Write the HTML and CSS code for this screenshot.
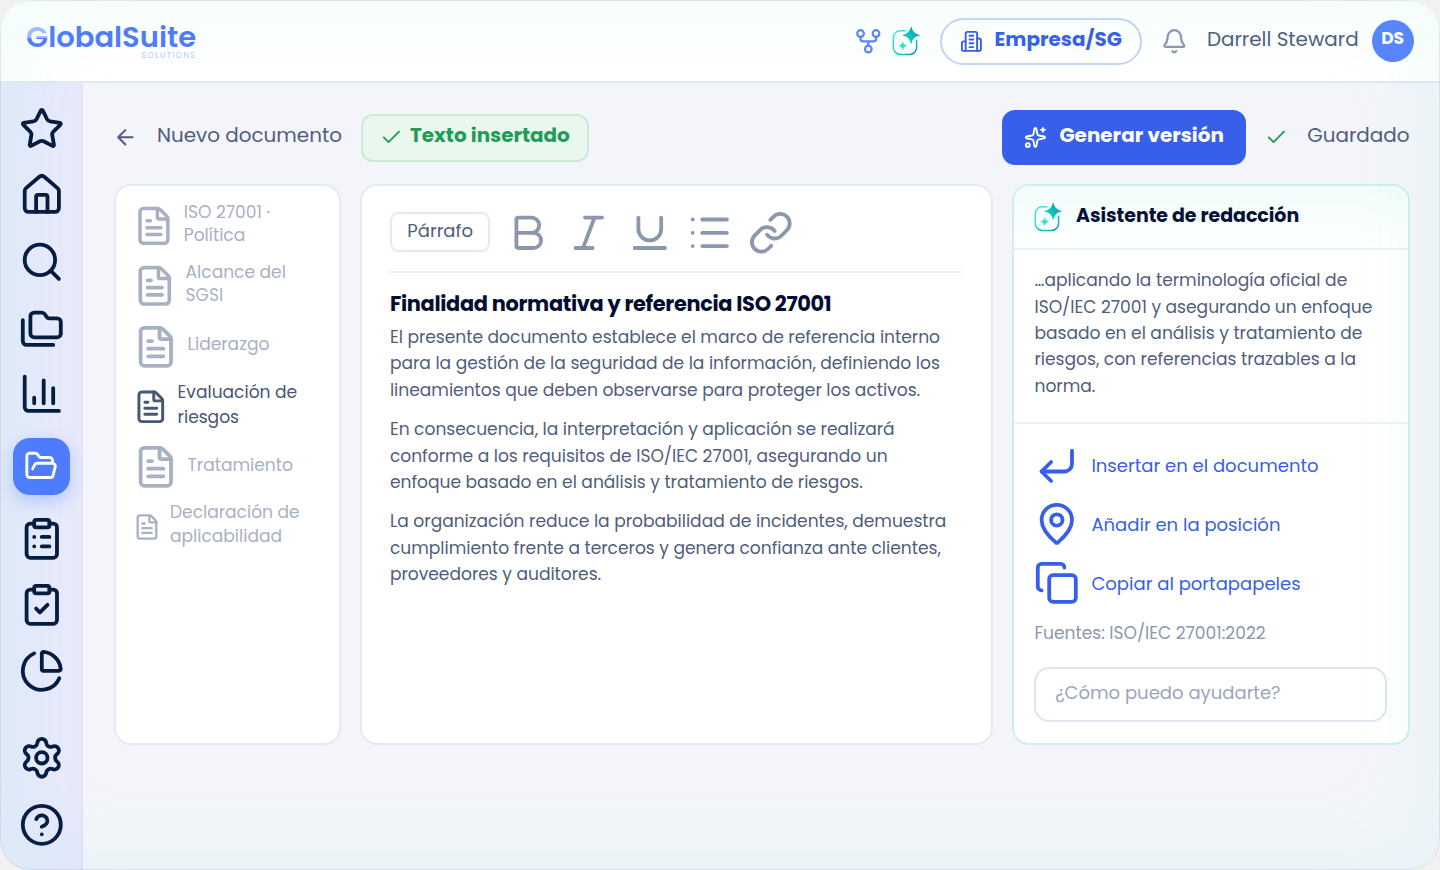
FILE: index.html
```
<!DOCTYPE html>
<html lang="es">
<head>
<meta charset="UTF-8">
<meta name="viewport" content="width=device-width,initial-scale=1">
<title>GlobalSuite · Nuevo documento</title>
<link rel="stylesheet" href="styles.css">
</head>
<body>

<!-- símbolos reutilizados -->
<svg class="defs" width="0" height="0" aria-hidden="true">
  <linearGradient id="gradIA" x1="0" y1="0" x2="1" y2="1">
    <stop offset="0" stop-color="#4fe9d6"/><stop offset=".55" stop-color="#12d6c2"/><stop offset="1" stop-color="#0b8fc4"/>
  </linearGradient>
  <linearGradient id="gradStar" x1="1" y1="0" x2="0" y2="1">
    <stop offset="0.2" stop-color="#0a9cc0"/><stop offset="0.8" stop-color="#12dcba"/>
  </linearGradient>
  <symbol id="doc" viewBox="0 0 24 24">
    <path d="M6 22a2 2 0 0 1-2-2V4a2 2 0 0 1 2-2h8a2.4 2.4 0 0 1 1.704.706l3.588 3.588A2.4 2.4 0 0 1 20 8v12a2 2 0 0 1-2 2z"/>
    <path d="M14 2v5a1 1 0 0 0 1 1h5M10 9H8M16 13H8M16 17H8"/>
  </symbol>
  <symbol id="check" viewBox="0 0 24 24"><path d="M20 6 9 17l-5-5"/></symbol>
  <symbol id="ia" viewBox="0 0 28 30">
    <path d="M13 4.7H8.3a7 7 0 0 0-7 7v9.700a7 7 0 0 0 7 7h9.300a7 7 0 0 0 7-7v-7.200" stroke="url(#gradIA)" stroke-width="1.5"/>
    <path d="M19.200 0c1.700 6 3.200 7.500 9.200 9.200-6 1.700-7.500 3.200-9.200 9.200-1.700-6-3.200-7.500-9.200-9.200 6-1.700 7.500-3.200 9.200-9.200z" fill="url(#gradStar)" stroke="none"/>
    <path d="M10.700 15c.7 3 1.700 4 4.700 4.700-3 .7-4 1.700-4.700 4.700-.7-3-1.700-4-4.700-4.700 3-.7 4-1.700 4.700-4.700z" fill="#35dfca" stroke="none"/>
  </symbol>
</svg>

<div class="app">
  <header class="header">
    <div class="logo">
      <span class="logo-name"><span class="logo-g">G</span>lobalSuite</span>
      <span class="logo-sub">SOLUTIONS</span>
    </div>
    <div class="header-right">
      <svg class="ico fork" viewBox="0 0 24 24"><circle cx="12" cy="19" r="3"/><circle cx="5" cy="5" r="3"/><circle cx="19" cy="5" r="3"/><path d="M19 8v2c0 1.200-.8 2-2 2H7c-1.200 0-2-.8-2-2V8M12 12v4"/></svg>
      <svg class="ico ia"><use href="#ia"/></svg>
      <button class="empresa">
        <svg class="ico sm" viewBox="0 0 24 24"><path d="M6 22V4a2 2 0 0 1 2-2h8a2 2 0 0 1 2 2v18Z"/><path d="M6 12H4a2 2 0 0 0-2 2v6a2 2 0 0 0 2 2h2M18 9h2a2 2 0 0 1 2 2v9a2 2 0 0 1-2 2h-2M10 6h4M10 10h4M10 14h4M10 18h4"/></svg>
        <span class="up">Empresa/SG</span>
      </button>
      <svg class="ico bell" viewBox="0 0 24 24"><path d="M10.268 21a2 2 0 0 0 3.464 0"/><path d="M3.262 15.326A1 1 0 0 0 4 17h16a1 1 0 0 0 .74-1.673C19.41 13.956 18 12.499 18 8A6 6 0 0 0 6 8c0 4.499-1.411 5.956-2.738 7.326"/></svg>
      <span class="user up">Darrell Steward</span>
      <span class="avatar"><span class="up">DS</span></span>
    </div>
  </header>

  <div class="body">
    <nav class="sidebar">
      <svg class="ico" viewBox="0 0 24 24"><path d="M11.525 2.295a.53.53 0 0 1 .95 0l2.31 4.679a2.123 2.123 0 0 0 1.595 1.16l5.166.756a.53.53 0 0 1 .294.904l-3.736 3.638a2.123 2.123 0 0 0-.611 1.878l.882 5.14a.53.53 0 0 1-.771.56l-4.618-2.428a2.122 2.122 0 0 0-1.973 0L6.396 21.01a.53.53 0 0 1-.77-.56l.881-5.139a2.122 2.122 0 0 0-.611-1.879L2.16 9.795a.53.53 0 0 1 .294-.906l5.165-.755a2.122 2.122 0 0 0 1.597-1.16z"/></svg>
      <svg class="ico" viewBox="0 0 24 24"><path d="M15 21v-8a1 1 0 0 0-1-1h-4a1 1 0 0 0-1 1v8"/><path d="M3 10a2 2 0 0 1 .709-1.528l7-6a2 2 0 0 1 2.582 0l7 6A2 2 0 0 1 21 10v9a2 2 0 0 1-2 2H5a2 2 0 0 1-2-2z"/></svg>
      <svg class="ico" viewBox="0 0 24 24"><circle cx="11" cy="11" r="8"/><path d="m21 21-4.34-4.34"/></svg>
      <svg class="ico" viewBox="0 0 24 24"><path d="M20 17a2 2 0 0 0 2-2V9a2 2 0 0 0-2-2h-3.9a2 2 0 0 1-1.69-.9l-.81-1.2a2 2 0 0 0-1.67-.9H8a2 2 0 0 0-2 2v9a2 2 0 0 0 2 2Z"/><path d="M2 8v11a2 2 0 0 0 2 2h14"/></svg>
      <svg class="ico" viewBox="0 0 24 24"><path d="M3 3v16a2 2 0 0 0 2 2h16M18 17V9M13 17V5M8 17v-3"/></svg>
      <div class="active">
        <svg class="ico" viewBox="0 0 24 24"><path d="m6 14 1.5-2.9A2 2 0 0 1 9.24 10H20a2 2 0 0 1 1.94 2.5l-1.54 6a2 2 0 0 1-1.95 1.5H4a2 2 0 0 1-2-2V5a2 2 0 0 1 2-2h3.9a2 2 0 0 1 1.69.9l.81 1.2a2 2 0 0 0 1.67.9H18a2 2 0 0 1 2 2v2"/></svg>
      </div>
      <svg class="ico" viewBox="0 0 24 24"><rect x="8" y="2" width="8" height="4" rx="1"/><path d="M16 4h2a2 2 0 0 1 2 2v14a2 2 0 0 1-2 2H6a2 2 0 0 1-2-2V6a2 2 0 0 1 2-2h2M12 11h4M12 16h4M8 11h.01M8 16h.01"/></svg>
      <svg class="ico" viewBox="0 0 24 24"><rect x="8" y="2" width="8" height="4" rx="1"/><path d="M16 4h2a2 2 0 0 1 2 2v14a2 2 0 0 1-2 2H6a2 2 0 0 1-2-2V6a2 2 0 0 1 2-2h2M9 14l2 2 4-4"/></svg>
      <svg class="ico" viewBox="0 0 24 24"><path d="M21 12c.552 0 1.005-.449.95-.998a10 10 0 0 0-8.953-8.951c-.55-.055-.998.398-.998.95v8a1 1 0 0 0 1 1z"/><path d="M21.21 15.89A10 10 0 1 1 8 2.83"/></svg>
      <svg class="ico last" viewBox="0 0 24 24"><path d="M9.671 4.136a2.34 2.34 0 0 1 4.659 0 2.34 2.34 0 0 0 3.319 1.915 2.34 2.34 0 0 1 2.33 4.033 2.34 2.34 0 0 0 0 3.831 2.34 2.34 0 0 1-2.33 4.033 2.34 2.34 0 0 0-3.319 1.915 2.34 2.34 0 0 1-4.659 0 2.34 2.34 0 0 0-3.32-1.915 2.34 2.34 0 0 1-2.33-4.033 2.34 2.34 0 0 0 0-3.831A2.34 2.34 0 0 1 6.35 6.051a2.34 2.34 0 0 0 3.319-1.915"/><circle cx="12" cy="12" r="3"/></svg>
      <svg class="ico" viewBox="0 0 24 24"><circle cx="12" cy="12" r="10"/><path d="M9.09 9a3 3 0 0 1 5.83 1c0 2-3 3-3 3M12 17h.01"/></svg>
    </nav>

    <main class="main">
      <div class="topbar">
        <svg class="ico back" viewBox="0 0 24 24"><path d="m12 19-7-7 7-7M19 12H5"/></svg>
        <span class="up">Nuevo documento</span>
        <span class="pill"><svg class="ico sm"><use href="#check"/></svg><span class="up">Texto insertado</span></span>
        <button class="generar">
          <svg class="ico sm" viewBox="0 0 24 24"><path d="M11.017 2.814a1 1 0 0 1 1.966 0l1.051 5.558a2 2 0 0 0 1.594 1.594l5.558 1.051a1 1 0 0 1 0 1.966l-5.558 1.051a2 2 0 0 0-1.594 1.594l-1.051 5.558a1 1 0 0 1-1.966 0l-1.051-5.558a2 2 0 0 0-1.594-1.594l-5.558-1.051a1 1 0 0 1 0-1.966l5.558-1.051a2 2 0 0 0 1.594-1.594z"/><path d="M20 2v4M22 4h-4"/><circle cx="4" cy="20" r="2"/></svg>
          <span class="up">Generar versión</span>
        </button>
        <svg class="ico sm ok"><use href="#check"/></svg>
        <span class="up">Guardado</span>
      </div>

      <div class="panels">
        <aside class="panel indice">
          <div class="item"><svg class="ico d1"><use href="#doc"/></svg><span>ISO 27001 ·<br>Política</span></div>
          <div class="item"><svg class="ico d2"><use href="#doc"/></svg><span>Alcance del<br>SGSI</span></div>
          <div class="item"><svg class="ico"><use href="#doc"/></svg><span>Liderazgo</span></div>
          <div class="item sel"><svg class="ico d3"><use href="#doc"/></svg><span>Evaluación de<br>riesgos</span></div>
          <div class="item"><svg class="ico"><use href="#doc"/></svg><span>Tratamiento</span></div>
          <div class="item alto"><svg class="ico d4"><use href="#doc"/></svg><span>Declaración de<br>aplicabilidad</span></div>
        </aside>

        <section class="panel editor">
          <div class="tools">
            <button class="parrafo">Párrafo</button>
            <svg class="ico" viewBox="0 0 24 24"><path d="M6 12h9a4 4 0 0 1 0 8H7a1 1 0 0 1-1-1V5a1 1 0 0 1 1-1h7a4 4 0 0 1 0 8"/></svg>
            <svg class="ico" viewBox="0 0 24 24"><path d="M19 4h-9M14 20H5M15 4 9 20"/></svg>
            <svg class="ico" viewBox="0 0 24 24"><path d="M6 4v6a6 6 0 0 0 12 0V4M4 20h16"/></svg>
            <svg class="ico" viewBox="0 0 24 24"><path d="M3 5h.01M3 12h.01M3 19h.01M8 5h13M8 12h13M8 19h13"/></svg>
            <svg class="ico" viewBox="0 0 24 24"><path d="M10 13a5 5 0 0 0 7.54.54l3-3a5 5 0 0 0-7.07-7.07l-1.72 1.71"/><path d="M14 11a5 5 0 0 0-7.54-.54l-3 3a5 5 0 0 0 7.07 7.07l1.71-1.71"/></svg>
          </div>
          <h1>Finalidad normativa y referencia ISO 27001</h1>
          <p>El presente documento establece el marco de referencia interno<br>para la gestión de la seguridad de la información, definiendo los<br>lineamientos que deben observarse para proteger los activos.</p>
          <p>En consecuencia, la interpretación y aplicación se realizará<br>conforme a los requisitos de ISO/IEC 27001, asegurando un<br>enfoque basado en el análisis y tratamiento de riesgos.</p>
          <p>La organización reduce la probabilidad de incidentes, demuestra<br>cumplimiento frente a terceros y genera confianza ante clientes,<br>proveedores y auditores.</p>
        </section>

        <section class="panel asistente">
          <h2><svg class="ico ia"><use href="#ia"/></svg><span class="up">Asistente de redacción</span></h2>
          <p>…aplicando la terminología oficial de<br>ISO/IEC 27001 y asegurando un enfoque<br>basado en el análisis y tratamiento de<br>riesgos, con referencias trazables a la<br>norma.</p>
          <div class="acciones">
            <a><svg class="ico" viewBox="0 0 24 24"><path d="M20 4v7a4 4 0 0 1-4 4H4"/><path d="m9 10-5 5 5 5"/></svg>Insertar en el documento</a>
            <a><svg class="ico" viewBox="0 0 24 24"><path d="M20 10c0 4.993-5.539 10.193-7.399 11.799a1 1 0 0 1-1.202 0C9.539 20.193 4 14.993 4 10a8 8 0 0 1 16 0"/><circle cx="12" cy="10" r="3"/></svg>Añadir en la posición</a>
            <a><svg class="ico" viewBox="0 0 24 24"><rect x="8" y="8" width="14" height="14" rx="2"/><path d="M4 16c-1.1 0-2-.9-2-2V4c0-1.1.9-2 2-2h10c1.1 0 2 .9 2 2"/></svg>Copiar al portapapeles</a>
          </div>
          <div class="fuentes">Fuentes: ISO/IEC 27001:2022</div>
          <input class="ask" placeholder="¿Cómo puedo ayudarte?">
        </section>
      </div>
    </main>
  </div>
</div>

</body>
</html>
```
FILE: styles.css
```
:root{
  --azul:    #385fe9;
  --marca:   #4f7bff;
  --navy:    #061a3f;
  --texto:   #4f5e7c;
  --gris:    #8b97ad;
  --linea:   #e4e9f3;
}
*{box-sizing:border-box;margin:0;padding:0}
body{
  font-family:Poppins,Inter,"Open Sans",sans-serif;
  font-size:19.95px;
  letter-spacing:-.02px;
  color:var(--texto);
  background:#f1f1f3;
}
button,input{font-family:inherit;background:none}
.defs{position:absolute}

/* ---------- Iconos ------------- */
.ico{
  width:45.6px;height:45.6px;
  flex:none;
  display:block;
  fill:none;
  stroke:currentColor;
  stroke-width:2;
  stroke-linecap:round;
  stroke-linejoin:round;
}
.ico.sm{width:22.8px;height:22.8px}
.ico.ia{width:28px;height:30px;overflow:visible}
/* la caja de Poppins queda algo baja */
.up{position:relative;top:-2px}

/* ---------- Marco -------------- */
.app{
  position:relative;
  width:1440px;height:870px;
  display:flex;
  flex-direction:column;
  background:#f4f5fa;
  border-radius:30px;
  overflow:hidden;
}
.app::after{
  content:"";
  position:absolute;inset:0;
  border-radius:30px;
  border:1px solid rgba(120,135,160,.2);
  box-shadow:inset 0 0 95px rgba(60,225,195,.085);
  pointer-events:none;
}

/* ---------- Header ------------- */
.header{
  height:83px;
  flex:none;
  display:flex;
  justify-content:space-between;
  align-items:center;
  padding:1px 26.4px 0 26px;
  background:#fff;
  border-bottom:2px solid #e2e8f2;
}
.logo{
  display:flex;
  flex-direction:column;
  align-items:flex-end;
  color:var(--marca);
}
.logo-name{font-size:29px;font-weight:600;line-height:30px}
.logo-g{
  background:linear-gradient(#a3bbff 53%,var(--marca) 53%);
  -webkit-background-clip:text;
  background-clip:text;
  color:transparent;
}
.logo-sub{
  margin:-1px 0 0;
  font-size:8px;
  line-height:9px;
  letter-spacing:1.3px;
  color:#b5c6fc;
}
.header-right{display:flex;align-items:center}
.ico.fork{width:26.6px;height:26.6px;color:#5a83fb;margin-right:10.5px}
.empresa{
  display:flex;
  align-items:center;
  gap:11.4px;
  height:47px;
  margin:0 19px 0 20px;
  padding:0 18.4px;
  border:2px solid #c5d4f7;
  border-radius:24px;
  background:#fff;
  color:var(--azul);
  font-size:19.95px;
  font-weight:700;
}
.ico.bell{width:26.6px;height:26.6px;color:var(--gris);margin-right:19px}
.user{margin-right:13px}
.header .up{top:-2.5px}
.avatar{
  width:42px;height:42px;
  display:flex;
  align-items:center;
  justify-content:center;
  border-radius:50%;
  background:#5984fd;
  color:#fff;
  font-size:17.1px;
  font-weight:700;
}
.avatar .up{top:-3px}

/* ---------- Sidebar ------------ */
.body{flex:1;display:flex;min-height:0}
.sidebar{
  width:83px;
  display:flex;
  flex-direction:column;
  align-items:center;
  gap:20.8px;
  padding:22.8px 0 22.8px 2px;
  background:linear-gradient(90deg,#e6ebfb,#e8e9fb);
  border-right:2px solid #dfe3f8;
  color:var(--navy);
}
.active{
  width:57px;height:57px;
  flex:none;
  display:flex;
  align-items:center;
  justify-content:center;
  border-radius:17px;
  background:var(--marca);
  box-shadow:0 6px 16px rgba(79,123,255,.32);
  color:#fff;
}
.active .ico{width:34.2px;height:34.2px}
.sidebar .last{margin-top:auto}

/* ---------- Barra superior ----- */
.main{flex:1;padding:27px 30.5px 0 31px}
.topbar{
  display:flex;
  align-items:center;
  height:55px;
  gap:19px;
  margin-bottom:19px;
}
.topbar .up{top:-3px}
.ico.back{width:24.7px;height:24.7px;margin-left:-.7px}
.pill{
  display:flex;
  align-items:center;
  gap:7.4px;
  height:48px;
  padding:0 17px;
  border:2px solid #c9ebd5;
  border-radius:12px;
  background:#eaf7ef;
  color:#229a58;
  font-weight:700;
}
.generar{
  display:flex;
  align-items:center;
  gap:12.2px;
  height:55px;
  margin-left:auto;
  padding:0 22.6px;
  border:none;
  border-radius:13px;
  background:var(--azul);
  color:#fff;
  font-size:19.95px;
  font-weight:700;
}
.ok{color:#229a58}

/* ---------- Paneles ------------ */
.panels{
  display:grid;
  grid-template-columns:226.5px 632.7px 397.5px;
  justify-content:space-between;
  height:560.5px;
}
.panel{
  background:#fff;
  border:2px solid var(--linea);
  border-radius:17px;
  font-size:17.1px;
}
.indice{
  display:flex;
  flex-direction:column;
  gap:14.1px;
  padding:16.8px 16.5px;
  line-height:23px;
  color:#a8b1c3;
}
.item{display:flex;align-items:center;gap:9.5px;height:46.2px}
.item span{position:relative;top:-2px;white-space:nowrap}
.item.sel{color:#475775}
.item.sel span,.item.alto span{line-height:24.5px}
.item.alto span{top:-3px}
.d1{width:41.8px;height:41.8px}
.d2{width:43.6px;height:43.6px}
.d3{width:35.6px;height:35.6px}
.d4{width:28px;height:28px}

.editor{padding:24.2px 28px}
.tools{
  display:flex;
  align-items:center;
  gap:15px;
  padding-bottom:15px;
  border-bottom:2px solid #eef2f8;
  color:var(--gris);
}
.parrafo{
  height:39.5px;
  width:100.5px;
  margin-top:-2px;
  padding-bottom:3px;
  border:2px solid var(--linea);
  border-radius:9px;
  color:var(--texto);
  font-size:18.05px;
}
h1{
  margin:16.2px 0 5px;
  font-size:20.9px;
  line-height:30px;
  letter-spacing:-.33px;
  color:#020d30;
}
.editor p{line-height:26.4px;margin-bottom:13px;white-space:nowrap}

/* ---------- Asistente ---------- */
.asistente{border-color:#d1efe9}
.asistente h2{
  display:flex;
  align-items:center;
  gap:14px;
  height:64px;
  padding-left:20px;
  border-radius:15px 15px 0 0;
  background:linear-gradient(#f1fcfa,#fff);
  border-bottom:2px solid #e6f1f2;
  font-size:19px;
  letter-spacing:-.05px;
  color:#041235;
}
.asistente p{
  height:174px;
  padding:17.4px 20.5px;
  border-bottom:2px solid #eef2f8;
  line-height:26.3px;
  white-space:nowrap;
}
.acciones{
  display:flex;
  flex-direction:column;
  gap:13.2px;
  padding:18.7px 20.4px 0;
}
.acciones a{
  display:flex;
  align-items:center;
  gap:11.4px;
  color:var(--azul);
  font-size:18.05px;
  letter-spacing:0;
}
.fuentes{padding:12.8px 20.5px 0;line-height:28px;color:var(--gris)}
.ask{
  display:block;
  width:353px;height:55px;
  margin:20.2px 0 0 20.2px;
  padding:0 19px 3px;
  border:2px solid #dfe5f1;
  border-radius:15px;
  font-size:18.05px;
}
.ask::placeholder{color:#9aa5ba}
```
